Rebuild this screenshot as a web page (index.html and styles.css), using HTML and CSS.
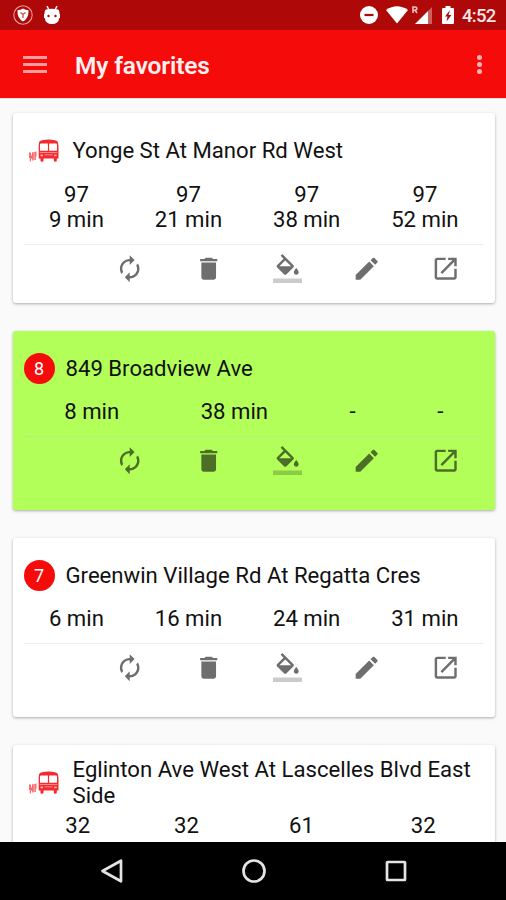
FILE: index.html
```
<!DOCTYPE html>
<html lang="en">

<head>
    <meta charset="UTF-8">
    <meta name="viewport" content="width=device-width, initial-scale=1.0">
    <title>My favorites</title>
    <link rel="stylesheet" href="styles.css">
</head>

<body>
    <!-- shared icons -->
    <svg class="defs" width="0" height="0">
        <symbol id="refresh" viewBox="0 0 24 24">
            <path d="M12 6v3l4-4-4-4v3c-4.42 0-8 3.58-8 8 0 1.57.46 3.03 1.24 4.26L6.7 14.8c-.45-.83-.7-1.79-.7-2.8 0-3.31 2.69-6 6-6zm6.76 1.74L17.3 9.2c.44.84.7 1.79.7 2.8 0 3.31-2.69 6-6 6v-3l-4 4 4 4v-3c4.42 0 8-3.58 8-8 0-1.57-.46-3.03-1.24-4.26z" />
        </symbol>
        <symbol id="delete" viewBox="0 0 24 24">
            <path d="M6 19c0 1.1.9 2 2 2h8c1.1 0 2-.9 2-2V7H6v12zM19 4h-3.500l-1-1h-5l-1 1H5v2h14V4z" />
        </symbol>
        <symbol id="fill" viewBox="0 0 24 24">
            <path d="M16.560 8.940L7.620 0 6.210 1.410l2.380 2.380-5.150 5.150c-.59.59-.59 1.540 0 2.120l5.500 5.500c.29.29.68.44 1.060.44s.77-.15 1.060-.44l5.500-5.500c.59-.58.59-1.530 0-2.120zM5.210 10L10 5.210 14.790 10H5.210zM19 11.500s-2 2.170-2 3.500c0 1.100.9 2 2 2s2-.9 2-2c0-1.330-2-3.500-2-3.500z" />
            <path fill-opacity=".36" d="M0 20h24v4H0z" />
        </symbol>
        <symbol id="edit" viewBox="0 0 24 24">
            <path d="M3 17.250V21h3.750L17.810 9.940l-3.750-3.750L3 17.250zM20.710 7.040c.39-.39.39-1.020 0-1.410l-2.340-2.340c-.39-.39-1.020-.39-1.410 0l-1.830 1.830 3.750 3.750 1.830-1.830z" />
        </symbol>
        <symbol id="open" viewBox="0 0 24 24">
            <path d="M19 19H5V5h7V3H5c-1.110 0-2 .9-2 2v14c0 1.100.89 2 2 2h14c1.100 0 2-.9 2-2v-7h-2v7zM14 3v2h3.590l-9.830 9.830 1.410 1.410L19 6.410V10h2V3h-7z" />
        </symbol>
        <symbol id="bus" viewBox="0 0 30 24">
            <path fill-rule="evenodd" d="M10 4Q10 1.800 13 1.200Q20 0 26 1.200Q29 1.800 29 4L29.500 7V19.500H27.800V21.500Q27.800 22.800 26.300 22.800T24.800 21.500V19.500H14.500V21.500Q14.500 22.800 13 22.800T11.500 21.500V19.500H9.700V7zM11 5.500V11.800H18.900V4.500H11.600zM20.100 4.500V11.800H28V5.500L27.500 4.500z" />
            <path fill="#fff" fill-opacity=".6" d="M10.800 13.200h17.500v.7H10.800zM11.500 15.500H14V17.200H11.500zM25.200 15.500h2.500V17.200h-2.500zM15.500 15.500h8.200v.8h-8.200z" />
            <path fill-opacity=".7" d="M0 13.500h2v3l1-.3v-3h1.800v8.300H3.300l-.3-2-1 .3v2.700H.8v-3.500H0zM5.300 13l2.200-.5v5h-.7v3.500H5.300z" />
        </symbol>
    </svg>

    <div class="status-bar">
        <div class="status-left">
            <svg width="20" height="20" viewBox="0 0 20 20">
                <circle cx="10" cy="10" r="9.200" fill="none" stroke="#e59a9a" stroke-width="1.100" />
                <path d="M10 3.500Q12.500 5 15.500 5.200Q16 13 10 16.500Q4 13 4.500 5.200Q7.500 5 10 3.500z" fill="#fff" />
                <path d="M7.500 7.500L10 9.500 12.500 7.500M10 9.500V13" fill="none" stroke="#b85050" stroke-width="1.300" />
            </svg>
            <svg width="18" height="19" viewBox="0 0 18 19">
                <path d="M4 0L6 4M14 0L12 4" stroke="#fff" stroke-width="1.400" />
                <path d="M3 3.500Q9 2 15 3.500Q16.500 4 16.500 8H17V12H16.300Q15.500 18 9 18T1.700 12H1V8H1.500Q1.500 4 3 3.500z" fill="#fff" />
                <circle cx="5.500" cy="10" r="1.200" fill="#ae0808" />
                <circle cx="12.500" cy="10" r="1.200" fill="#ae0808" />
            </svg>
        </div>
        <div class="status-right">
            <svg class="dnd" width="18" height="18" viewBox="0 0 18 18">
                <circle cx="9" cy="9" r="9" fill="#fff" />
                <path d="M4.500 7.900h9v2.200h-9z" fill="#ae0808" />
            </svg>
            <svg class="wifi" width="22" height="18" viewBox="0 0 22 18">
                <path d="M0 4Q11-3.500 22 4L11 17.500z" fill="#fff" />
            </svg>
            <svg class="signal" width="21" height="18" viewBox="0 0 21 18">
                <path d="M1 7V1H3Q4.800 1 4.800 2.600T3 4.200H1M3 4.200L5 7" fill="none" stroke="#f0bcbc" stroke-width="1.600" />
                <path d="M16 5L20 1V18H16z" fill="#cf5f5f" />
                <path d="M3 18L16 5V18z" fill="#fff" />
            </svg>
            <svg class="battery" width="12" height="18" viewBox="0 0 12 18">
                <path d="M3.500 0h5v2H11q1 0 1 1v14q0 1-1 1H1q-1 0-1-1V3q0-1 1-1h2.500z" fill="#fff" />
                <path d="M8 4L3 10.500H5.500L4.500 15.500 9.500 9H6.500z" fill="#ae0808" />
            </svg>
            <span class="clock">4:52</span>
        </div>
    </div>

    <div class="app-bar">
        <div class="menu"><i></i><i></i><i></i></div>
        <div class="app-title">My favorites</div>
        <div class="more"><i></i><i></i><i></i></div>
    </div>

    <div class="list">
        <div class="card card-first">
            <div class="card-header">
                <svg class="bus"><use href="#bus" /></svg>
                <div class="stop">Yonge St At Manor Rd West</div>
            </div>
            <div class="times">
                <div>97<br>9 min</div>
                <div>97<br>21 min</div>
                <div>97<br>38 min</div>
                <div>97<br>52 min</div>
            </div>
            <div class="actions">
                <svg><use href="#refresh" /></svg>
                <svg><use href="#delete" /></svg>
                <svg><use href="#fill" /></svg>
                <svg><use href="#edit" /></svg>
                <svg><use href="#open" /></svg>
            </div>
        </div>

        <div class="card card-route green">
            <div class="card-header">
                <div class="badge">8</div>
                <div class="stop">849 Broadview Ave</div>
            </div>
            <div class="times">
                <div>8 min</div>
                <div>38 min</div>
                <div>-</div>
                <div>-</div>
            </div>
            <div class="actions">
                <svg><use href="#refresh" /></svg>
                <svg><use href="#delete" /></svg>
                <svg><use href="#fill" /></svg>
                <svg><use href="#edit" /></svg>
                <svg><use href="#open" /></svg>
            </div>
        </div>

        <div class="card card-route">
            <div class="card-header">
                <div class="badge">7</div>
                <div class="stop">Greenwin Village Rd At Regatta Cres</div>
            </div>
            <div class="times">
                <div>6 min</div>
                <div>16 min</div>
                <div>24 min</div>
                <div>31 min</div>
            </div>
            <div class="actions">
                <svg><use href="#refresh" /></svg>
                <svg><use href="#delete" /></svg>
                <svg><use href="#fill" /></svg>
                <svg><use href="#edit" /></svg>
                <svg><use href="#open" /></svg>
            </div>
        </div>

        <div class="card card-last">
            <div class="card-header">
                <svg class="bus"><use href="#bus" /></svg>
                <div class="stop">Eglinton Ave West At Lascelles Blvd East Side</div>
            </div>
            <div class="times">
                <div class="short">32</div>
                <div class="short">32</div>
                <div class="long">61</div>
                <div class="long">32</div>
            </div>
        </div>
    </div>

    <div class="nav-bar">
        <svg width="24" height="26" viewBox="0 0 24 26">
            <path d="M21 2.700V23.300L2.500 13z" />
        </svg>
        <svg width="26" height="26" viewBox="0 0 26 26">
            <circle cx="13" cy="13" r="10.500" />
        </svg>
        <svg width="24" height="24" viewBox="0 0 24 24">
            <rect x="3" y="3" width="18" height="18" rx=".5" />
        </svg>
    </div>
</body>

</html>
```
FILE: styles.css
```
body {
    display: flex;
    flex-direction: column;
    height: 900px;
    margin: 0;
    overflow: hidden;
    background-color: #fafafa;
    font-family: Roboto, "Liberation Sans", sans-serif;
    color: #111;
}

svg {
    display: block;
    flex: none;
}

.defs {
    position: absolute;
}

.status-bar {
    display: flex;
    flex: none;
    justify-content: space-between;
    align-items: center;
    height: 30px;
    padding: 0 10px 0 13px;
    box-sizing: border-box;
    background-color: #ae0808;
}

.status-left,
.status-right {
    display: flex;
    align-items: center;
}

.status-left {
    gap: 10px;
}

.wifi {
    margin-left: 8px;
}

.signal {
    margin-left: 4px;
}

.battery {
    margin-left: 9px;
}

.clock {
    width: 34px;
    margin-left: 8px;
    padding-top: 1px;
    font-size: 18.5px;
    font-weight: 500;
    letter-spacing: -0.7px;
    line-height: 30px;
    color: #fbe6e6;
}

.app-bar {
    display: flex;
    flex: none;
    align-items: center;
    height: 68px;
    padding: 0 23px;
    box-sizing: border-box;
    background-color: #f60b0b;
    box-shadow: 0 1px 1px rgba(0, 0, 0, 0.1);
}

.menu {
    display: flex;
    flex-direction: column;
    gap: 4px;
    width: 24px;
}

.menu i {
    height: 3px;
    background-color: #fd9d9d;
}

.app-title {
    flex: 1;
    margin-left: 28px;
    padding-top: 3px;
    font-size: 24.5px;
    font-weight: 600;
    letter-spacing: -0.15px;
    color: #fff0f0;
}

.more {
    display: flex;
    flex-direction: column;
    align-items: center;
    gap: 2px;
    width: 7px;
    padding-top: 1px;
}

.more i {
    width: 5px;
    height: 5px;
    border-radius: 50%;
    background-color: #fdb4b4;
}

.list {
    display: flex;
    flex-direction: column;
    flex: 1;
    gap: 28px;
    min-height: 0;
    padding: 14.5px 11px 0 12.5px;
    overflow: hidden;
}

.card {
    flex: none;
    padding: 0 11px;
    border-radius: 3px;
    background-color: #fff;
    box-shadow: 0 1px 3px rgba(0, 0, 0, 0.32);
}

.card-first {
    padding-top: 1px;
    padding-bottom: 10.5px;
}

.card-route {
    padding-bottom: 25.5px;
}

.card-last {
    padding-bottom: 12px;
}

.green {
    background-color: #b2ff59;
}

.card-header {
    display: flex;
    align-items: center;
    height: 68px;
    padding-top: 7px;
    box-sizing: border-box;
}

.bus {
    width: 30px;
    height: 24px;
    margin: 0 14px 0 5px;
    fill: #f62a2e;
}

.badge {
    flex: none;
    width: 31px;
    height: 31px;
    margin-right: 11px;
    border-radius: 50%;
    background-color: #f60b0b;
    font-size: 18px;
    line-height: 32px;
    text-align: center;
    color: #fff;
}

.stop,
.times {
    font-size: 22.15px;
    line-height: 25.5px;
}

.times {
    display: flex;
    text-align: center;
}

.times div {
    flex: 1 1 auto;
}

.times .short {
    flex-basis: 54px;
}

.times .long {
    flex-basis: 67px;
}

.actions {
    display: flex;
    justify-content: flex-end;
    align-items: center;
    gap: 49.4px;
    height: 49px;
    margin-top: 11px;
    padding-right: 24px;
    border-top: 1px solid rgba(200, 200, 215, 0.35);
    box-sizing: border-box;
}

.actions svg {
    width: 29.4px;
    height: 29.4px;
    fill: rgba(0, 0, 0, 0.57);
}

.nav-bar {
    display: flex;
    flex: none;
    justify-content: center;
    align-items: center;
    gap: 117px;
    height: 58px;
    padding-left: 2px;
    background-color: #000;
}

.nav-bar svg {
    fill: none;
    stroke: #e4e4e4;
    stroke-width: 2.7;
    stroke-linejoin: round;
}
```
